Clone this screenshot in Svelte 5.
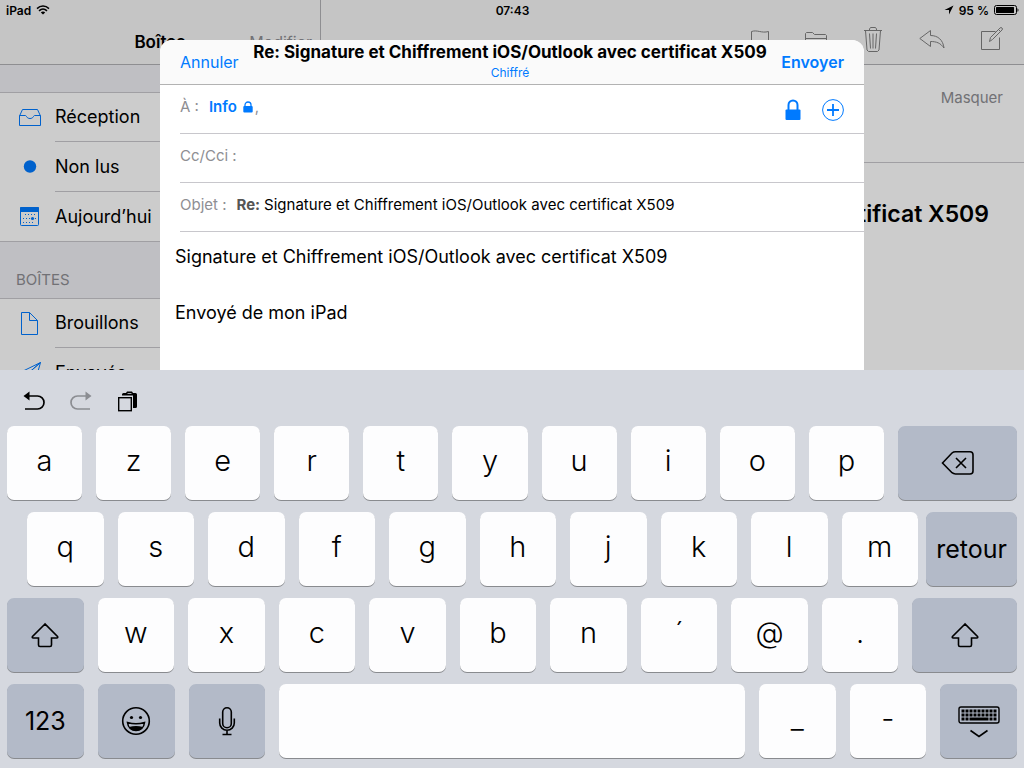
<script lang="ts">
type Key = { label?: string; icon?: string; name?: string; size?: number; dark?: boolean };

const LETTER = 153;

const letters = (text: string): Key[] => text.split("").map((label) => ({ label }));

const rows: { name: string; keys: Key[] }[] = [
  {
    name: "first",
    keys: [
      ...letters("azertyuiop").map((k) => ({ ...k, size: 150 })),
      { icon: "delete", name: "Effacer", size: 238, dark: true },
    ],
  },
  {
    name: "second",
    keys: [...letters("qsdfghjklm"), { label: "retour", size: 182, dark: true }],
  },
  {
    name: "third",
    keys: [
      { icon: "shift", name: "Majuscule", dark: true },
      ...letters("wxcvbn´@."),
      { icon: "shift", name: "Majuscule", size: 209, dark: true },
    ],
  },
  {
    name: "fourth",
    keys: [
      { label: "123", dark: true },
      { icon: "emoji", name: "Emoji", dark: true },
      { icon: "mic", name: "Dictée", dark: true },
      { name: "Espace", size: 928 },
      { label: "_" },
      { label: "-" },
      { icon: "hide", name: "Masquer le clavier", dark: true },
    ],
  },
];

const smart = [
  { icon: "inbox", label: "Réception" },
  { icon: "unread", label: "Non lus" },
  { icon: "today", label: "Aujourd’hui" },
];
const boxes = [
  { icon: "drafts", label: "Brouillons" },
  { icon: "sent", label: "Envoyés" },
];

const keyboardCells = [0, 1, 2, 3, 4, 5, 6, 7, 8];

let cc = $state("");
let to = $state("");
let subject = $state("Signature et Chiffrement iOS/Outlook avec certificat X509");
let message = $state(
  "Signature et Chiffrement iOS/Outlook avec certificat X509\n\nEnvoyé de mon iPad",
);
</script>

{#snippet mailbox(item: { icon: string; label: string })}
  <a class="mailbox" href="#{item.icon}">
    <svg width="30" height="30" viewBox="0 0 30 30" fill="none" stroke="#007aff" aria-hidden="true">
      {#if item.icon === "inbox"}
        <path d="M4.500 14L7.500 7.500h15l3 6.500v9.500h-21zM4.500 13.500h6c1 0 1 3 4.500 3s3.500-3 4.500-3h6" />
      {:else if item.icon === "unread"}
        <circle cx="15" cy="14.500" r="6.200" fill="#007aff" stroke="none" />
      {:else if item.icon === "today"}
        <rect x="5.500" y="5.500" width="18" height="18" rx="1" />
        <path d="M5.500 5.500h18v4h-18z" fill="#007aff" />
        <path d="M10 12.500h11M8 16.500h13M8 20.500h11" stroke-dasharray="1 2" />
        <circle cx="17.500" cy="16.500" r="1.600" fill="#007aff" stroke="none" />
      {:else if item.icon === "drafts"}
        <path d="M6.500 4.500h8l8 8v14h-16zM14.500 4.500v8h8" />
      {:else}
        <path d="M25.500 4.500L4 15l6 3zM25.500 4.500L10 18v6l4-4 6 4z" />
      {/if}
    </svg>
    <span>{item.label}</span>
  </a>
{/snippet}

<div class="screen">
  <div class="mail">
    <header class="status">
      <div class="side">
        <span>iPad</span>
        <svg width="14" height="10" viewBox="0 0 14 10" fill="none" stroke="#000" aria-hidden="true">
          <path d="M1 3.600c3.500-3.400 8.500-3.400 12 0" stroke-width="1.500" />
          <path d="M3 5.900c2.400-2.300 5.600-2.300 8 0" stroke-width="1.500" />
          <path d="M7 9.600L4.800 7.400c1.300-1.100 3.100-1.100 4.400 0z" fill="#000" stroke="none" />
        </svg>
      </div>
      <span>07:43</span>
      <div class="side right">
        <svg width="10" height="10" viewBox="0 0 10 10" aria-hidden="true">
          <path d="M9.500.5L.5 5h4.500v4.500z" />
        </svg>
        <span>95 %</span>
        <svg width="25" height="10" viewBox="0 0 25 10" aria-hidden="true">
          <rect x=".5" y=".5" width="22" height="9" rx="2" fill="none" stroke="#000" />
          <rect x="2" y="2" width="18" height="6" rx=".5" />
          <path d="M23.500 3.200c1.300.4 1.300 3.200 0 3.600z" />
        </svg>
      </div>
    </header>

    <div class="columns">
      <aside class="sidebar">
        <div class="bar">
          <h2>Boîtes</h2>
          <button class="edit">Modifier</button>
        </div>
        <nav>
          <div class="spacer"></div>
          <div class="group">
            {#each smart as item}
              {@render mailbox(item)}
            {/each}
          </div>
          <h3>BOÎTES</h3>
          <div class="group">
            {#each boxes as item}
              {@render mailbox(item)}
            {/each}
          </div>
        </nav>
      </aside>

      <main class="detail">
        <div class="bar tools">
          <button aria-label="Marquer">
            <svg width="18" height="26" viewBox="0 0 18 26">
              <path d="M.5 26V4.500c6-2 10 2 17 0v11c-7 2-11-2-17 0" />
            </svg>
          </button>
          <button aria-label="Déplacer">
            <svg width="22" height="26" viewBox="0 0 22 26">
              <path d="M.5 23.500v-17l1-1h6l2 2h11l1 1v15zM.5 11.500h21" />
            </svg>
          </button>
          <button aria-label="Supprimer">
            <svg width="20" height="26" viewBox="0 0 20 26">
              <path d="M1 3.500h18M6.500 3.500v-1.500l1-1.500h5l1 1.500v1.500M2.500 3.500L4 23l1.500 1.500h9L16 23l1.500-19.500M6.500 6.500l1 15M10 6.500v15M13.500 6.500l-1 15" />
            </svg>
          </button>
          <button aria-label="Répondre">
            <svg width="26" height="26" viewBox="0 0 26 26">
              <path d="M.8 11.500L11.500 3.500v5c7.500 0 12.500 4.500 13.500 12.500-3.500-5-7.500-6.500-13.500-6.500v5z" />
            </svg>
          </button>
          <button aria-label="Nouveau message">
            <svg width="22" height="26" viewBox="0 0 22 26">
              <path d="M14.500 4.500H.5v18h18V10.500M8.500 14.500l1-4L19 1q1-1 2 0t0 2l-9.500 9.500zM17.500 2.500l2 2" />
            </svg>
          </button>
        </div>
        <div class="sender">
          <button>Masquer</button>
        </div>
        <h1>Signature et Chiffrement iOS/Outlook avec certificat X509</h1>
      </main>
    </div>

    <div class="dim"></div>

    <form class="compose" onsubmit={(e) => e.preventDefault()}>
      <div class="head">
        <button type="button" class="action">Annuler</button>
        <div class="title">
          <strong>Re: Signature et Chiffrement iOS/Outlook avec certificat X509</strong>
          <small>Chiffré</small>
        </div>
        <button type="submit" class="action send">Envoyer</button>
      </div>

      <div class="field">
        <label for="to">À :</label>
        <span class="recipient">
          Info
          <svg width="10" height="12" viewBox="0 0 10 12" aria-hidden="true">
            <path d="M2 5.500V4a3 3 0 0 1 6 0v1.500" fill="none" stroke="#007aff" stroke-width="1.300" />
            <rect x=".3" y="5" width="9.400" height="6.500" rx="1" fill="#007aff" />
          </svg>
        </span>
        <span class="comma">,</span>
        <input id="to" bind:value={to} />
        <button type="button" aria-label="Chiffrer">
          <svg width="16" height="22" viewBox="0 0 16 22">
            <path d="M3.500 11V6a4.500 4.500 0 0 1 9 0v5" fill="none" stroke="#007aff" stroke-width="2" />
            <rect x=".5" y="10.500" width="15" height="10.500" rx="1" fill="#007aff" />
          </svg>
        </button>
        <button type="button" aria-label="Ajouter un contact">
          <svg width="22" height="22" viewBox="0 0 22 22" fill="none" stroke="#007aff">
            <circle cx="11" cy="11" r="10.400" />
            <path d="M11 5v12M5 11h12" stroke-width="1.800" />
          </svg>
        </button>
      </div>
      <div class="field">
        <label for="cc">Cc/Cci :</label>
        <input id="cc" bind:value={cc} />
      </div>
      <div class="field">
        <label for="subject">Objet :</label>
        <b class="prefix">Re:</b>
        <input id="subject" bind:value={subject} />
      </div>
      <textarea aria-label="Message" spellcheck="false" bind:value={message}></textarea>
    </form>
  </div>

  <section class="keyboard" aria-label="Clavier">
    <div class="shortcuts">
      <button aria-label="Annuler la frappe">
        <svg width="22" height="22" viewBox="0 0 22 22" fill="none" stroke="#000" stroke-width="1.700">
          <path d="M5 6h9.500a6.500 6.500 0 0 1 0 13H2" />
          <path d="M.5 6L6.500 1.500v9z" fill="#000" stroke="none" />
        </svg>
      </button>
      <button aria-label="Rétablir" disabled>
        <svg width="22" height="22" viewBox="0 0 22 22" fill="none" stroke="#8b8d92" stroke-width="1.700">
          <path d="M17 6H7.500a6.500 6.500 0 0 0 0 13H20" />
          <path d="M21.500 6L15.500 1.500v9z" fill="#8b8d92" stroke="none" />
        </svg>
      </button>
      <button aria-label="Coller">
        <svg width="22" height="22" viewBox="0 0 22 22">
          <path d="M5 5.500V4.500a1.500 1.500 0 0 1 1.500-1.500H9l1-1.500h5L16 3h2.500A1.500 1.500 0 0 1 20 4.500v12a1.500 1.500 0 0 1-1.500 1.500H16V5.500z" />
          <path d="M10.500 3.500h4" stroke="#a5a8ae" />
          <rect x="1.700" y="7.700" width="12.600" height="13" fill="#d5d8df" stroke="#000" stroke-width="1.400" />
        </svg>
      </button>
    </div>

    {#each rows as row}
      <div class="row {row.name}">
        {#each row.keys as key}
          <button
            class="key"
            class:dark={key.dark}
            aria-label={key.name}
            style:flex-grow={key.size ?? LETTER}
          >
            {#if key.label}
              {key.label}
            {:else if key.icon === "delete"}
              <svg width="34" height="26" viewBox="0 0 34 26">
                <path d="M1.500 13L11 3q1.500-1.300 3.500-1.300H29q3 0 3 3V21q0 3-3 3H14.500q-2 0-3.500-1.300zM15 8l10 10M25 8l-10 10" />
              </svg>
            {:else if key.icon === "shift"}
              <svg width="28" height="26" viewBox="0 0 28 26">
                <path d="M14 2L1.500 14.500q-.8 1.500.8 1.500H7.500v7q0 1.500 1.500 1.500h10q1.500 0 1.500-1.500v-7h5.200q1.600 0 .8-1.500z" />
              </svg>
            {:else if key.icon === "emoji"}
              <svg width="30" height="30" viewBox="0 0 30 30">
                <circle cx="15" cy="15" r="13.300" />
                <circle cx="10.500" cy="11.500" r="1.600" fill="#000" stroke="none" />
                <circle cx="19.500" cy="11.500" r="1.600" fill="#000" stroke="none" />
                <path d="M6.500 16.500q8.500 2.500 17 0c-.5 5-4 8-8.500 8s-8-3-8.500-8z" />
                <path d="M8 21q7-2 14 0-2.500 3.500-7 3.500T8 21z" fill="#000" stroke="none" />
              </svg>
            {:else if key.icon === "mic"}
              <svg width="18" height="30" viewBox="0 0 18 30">
                <rect x="4.700" y="1.700" width="8.600" height="20" rx="4.300" />
                <path d="M1.700 12.500V17a7.300 7.300 0 0 0 14.600 0v-4.500M9 24.500v4M4.500 28.500h9" />
              </svg>
            {:else if key.icon === "hide"}
              <svg width="42" height="34" viewBox="0 0 42 34">
                <rect x="1" y="3" width="40" height="16" rx="2" stroke-width="1.400" />
                {#each keyboardCells as cell}
                  <rect class="cell" x={3.500 + cell * 4} y="5.500" width="3" height="3" />
                  <rect class="cell" x={3.500 + cell * 4} y="9.500" width="3" height="3" />
                {/each}
                <path class="cell" d="M3.500 13.500h3v3h-3zM7.500 13.500h3v3h-3zM11.500 13.500h19v3h-19zM31.500 13.500h3v3h-3zM35.500 13.500h3v3h-3z" />
                <path d="M12.500 26.500l8.500 6 8.500-6" />
              </svg>
            {/if}
          </button>
        {/each}
      </div>
    {/each}
  </section>
</div>

<style>
  :global(body) {
    background: #d5d8df;
  }
  .screen {
    height: 100vh;
    display: flex;
    flex-direction: column;
    font-family: Inter, "Liberation Sans", sans-serif;
    color: #000;
  }
  button,
  input,
  textarea {
    font: inherit;
    color: inherit;
    border: none;
    background: none;
    padding: 0;
    outline: none;
  }
  h1,
  h2,
  h3 {
    margin: 0;
  }
  svg {
    display: block;
    flex: none;
  }
  .mail {
    position: relative;
    flex: 1;
    min-height: 0;
    overflow: hidden;
    display: flex;
    flex-direction: column;
    background: #fff;
  }
  .status {
    display: grid;
    grid-template-columns: 1fr auto 1fr;
    align-items: center;
    height: 20px;
    padding: 0 5px 0 6px;
    position: absolute;
    inset: 0 0 auto;
    font-size: 12px;
    font-weight: 600;
  }
  .side {
    display: flex;
    align-items: center;
    gap: 5px;
  }
  .right {
    justify-content: flex-end;
  }
  .columns {
    flex: 1;
    display: flex;
  }
  .sidebar {
    width: 320px;
    flex: none;
    border-right: 1px solid #b2b2b6;
    background: #efeff4;
  }
  .bar {
    box-sizing: border-box;
    height: 65px;
    padding-top: 20px;
    background: #f7f7f7;
    border-bottom: 1px solid #b2b2b6;
    display: grid;
    align-items: center;
    font-size: 16px;
  }
  .bar h2 {
    grid-area: 1 / 1;
    text-align: center;
    font-size: 17px;
    font-weight: 600;
  }
  .edit {
    grid-area: 1 / 1;
    justify-self: end;
    padding-right: 8px;
    color: #8e8e93;
  }
  .spacer {
    height: 27px;
  }
  .group {
    background: #fff;
    box-shadow: inset 0 1px #c8c7cc, inset 0 -1px #c8c7cc;
  }
  .mailbox {
    display: flex;
    align-items: center;
    height: 50px;
    padding-left: 15px;
    gap: 10px;
    color: inherit;
    text-decoration: none;
    font-size: 18px;
  }
  .mailbox span {
    flex: 1;
    line-height: 49px;
    border-bottom: 1px solid #c8c7cc;
  }
  .mailbox:last-child span {
    border-color: transparent;
  }
  h3 {
    height: 56px;
    box-sizing: border-box;
    padding: 28px 16px 0;
    font-size: 15px;
    line-height: 20px;
    font-weight: 400;
    color: #8e8e93;
  }
  .detail {
    flex: 1;
    min-width: 0;
  }
  .tools {
    display: flex;
    justify-content: flex-end;
    gap: 36px;
    padding-right: 21px;
    padding-bottom: 4px;
  }
  .tools svg {
    fill: none;
    stroke: #808080;
  }
  .sender {
    height: 98px;
    border-bottom: 1px solid #c8c7cc;
    padding: 22px 21px 0;
    box-sizing: border-box;
    text-align: right;
    font-size: 15px;
    line-height: 22px;
    color: #8e8e93;
  }
  h1 {
    padding: 35px 35px 0 0;
    font-size: 23px;
    line-height: 32px;
    font-weight: 600;
    display: flex;
    justify-content: flex-end;
    white-space: nowrap;
  }
  .dim {
    position: absolute;
    inset: 0;
    background: rgba(0, 0, 0, 0.2);
  }
  .compose {
    position: absolute;
    inset: 40px 0 0;
    max-width: 704px;
    margin: 0 auto;
    border-radius: 12px 12px 0 0;
    overflow: hidden;
    background: #fff;
    display: flex;
    flex-direction: column;
  }
  .head {
    box-sizing: border-box;
    height: 45px;
    padding: 0 20px;
    background: #fafafa;
    border-bottom: 1px solid #b2b2b2;
    display: flex;
    align-items: center;
    justify-content: space-between;
  }
  .action {
    font-size: 16px;
    color: #007aff;
  }
  .send {
    font-weight: 600;
  }
  .title {
    height: 44px;
    display: flex;
    flex-direction: column;
    align-items: center;
    white-space: nowrap;
  }
  .title strong {
    font-size: 17px;
    line-height: 24px;
    font-weight: 700;
  }
  .title small {
    font-size: 12px;
    line-height: 18px;
    color: #007aff;
  }
  .field {
    box-sizing: border-box;
    height: 49px;
    margin-left: 20px;
    padding-right: 20px;
    border-bottom: 1px solid #c8c7cc;
    display: flex;
    align-items: center;
    font-size: 15px;
    line-height: 22px;
  }
  .field > :not(button) {
    padding-bottom: 4px;
  }
  .field label {
    margin-right: 10px;
    color: #8e8e93;
  }
  .field input {
    flex: 1;
    min-width: 0;
  }
  .field button {
    margin-left: 21px;
    padding-top: 2px;
  }
  .recipient {
    display: flex;
    align-items: center;
    gap: 6px;
    color: #007aff;
    font-weight: 600;
  }
  .comma {
    margin-left: 2px;
    color: #8e8e93;
  }
  .prefix {
    margin-right: 4px;
    color: #555;
  }
  textarea {
    flex: 1;
    resize: none;
    padding: 11px 15px 0;
    font-size: 18px;
    line-height: 28px;
    overflow: hidden;
  }
  .keyboard {
    display: flex;
    flex-direction: column;
    gap: 12px;
    padding: 0 7px 10px;
    background: #d5d8df;
  }
  .shortcuts {
    display: flex;
    gap: 25px;
    height: 44px;
    padding: 20px 16px 0;
    box-sizing: border-box;
  }
  .shortcuts button {
    height: 22px;
  }
  .row {
    display: flex;
    gap: 14px;
  }
  .key {
    flex: 1 1 0;
    min-width: 0;
    height: 74px;
    padding-bottom: 6px;
    border-radius: 7px;
    background: #fdfdfe;
    box-shadow: 0 1px #898b8f;
    display: flex;
    align-items: center;
    justify-content: center;
    font-size: 29px;
    font-weight: 350;
  }
  .dark {
    padding-bottom: 0;
    background: #b3bac8;
    font-size: 25px;
    font-weight: 400;
  }
  .key svg {
    fill: none;
    stroke: #000;
    stroke-width: 1.600;
  }
  .key .cell {
    fill: #000;
    stroke: none;
  }
  .second {
    padding-left: 20px;
  }
  .second .dark {
    margin-left: -6px;
  }
</style>
